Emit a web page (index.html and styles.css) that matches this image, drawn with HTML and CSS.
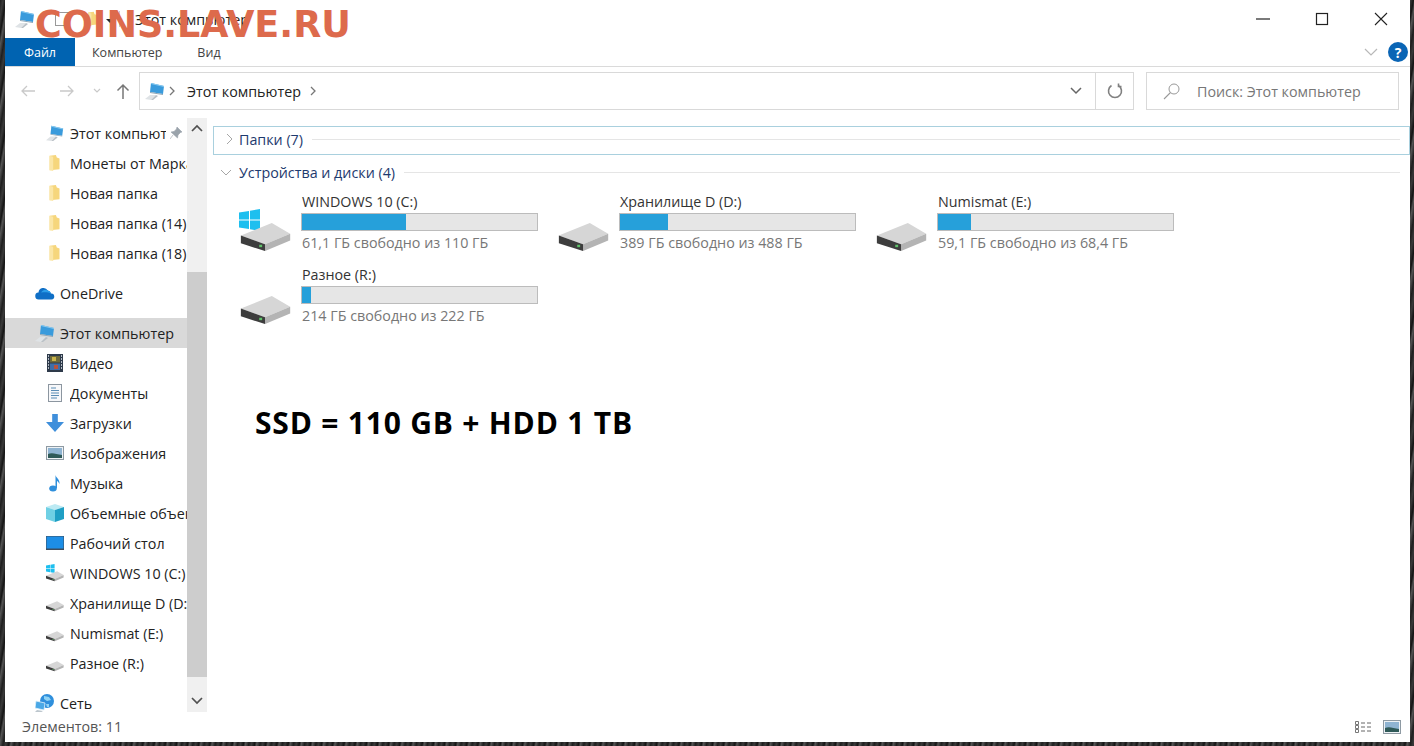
FILE: index.html
```html
<!DOCTYPE html>
<html lang="ru">
<head>
<meta charset="UTF-8">
<title>Этот компьютер</title>
<link rel="stylesheet" href="styles.css">
</head>
<body>
<svg class="defs" width="0" height="0">
  <symbol id="pc" viewBox="0 0 20 20">
    <polygon points="6,2 19,5 18,13 5,11" fill="#3a9bdc"/>
    <polygon points="6,2 19,5 19,6 6,3" fill="#8ccbf0"/>
    <polygon points="5,11 18,13 18,14 5,12" fill="#8fa7b8"/>
    <polygon points="5,14 11,14 6,19 0,18" fill="#dfe3e6"/>
    <polygon points="11,14 13,15 8,19 6,19" fill="#b9c0c6"/>
  </symbol>
  <symbol id="folder" viewBox="0 0 16 20">
    <polygon points="2,2 9,1 10,4 13,5 13,17 2,18" fill="#f6d67c"/>
    <polygon points="2,2 6,3 6,19 2,18" fill="#fbe6a6"/>
  </symbol>
  <symbol id="hdd" viewBox="0 0 52 30">
    <polygon points="0,13 32,0 51,11 25,22" fill="#d6d6d6"/>
    <polygon points="25,22 51,11 51,18 25,29" fill="#b4b4b4"/>
    <polygon points="0,13 25,22 25,29 0,21" fill="#3d3d3d"/>
    <rect x="19" y="22.500" width="3" height="2.500" fill="#5fc26a"/>
  </symbol>
  <symbol id="win" viewBox="0 0 22 22">
    <polygon points="0,3.500 10,2 10,10.500 0,10.500" fill="#1ebfef"/>
    <polygon points="11,1.800 21,0 21,10.500 11,10.500" fill="#1ebfef"/>
    <polygon points="0,11.500 10,11.500 10,20 0,18.500" fill="#1ebfef"/>
    <polygon points="11,11.500 21,11.500 21,22 11,20.200" fill="#1ebfef"/>
  </symbol>
  <symbol id="cloud" viewBox="0 0 20 14">
    <path d="M4 13.500a3.500 3.500 0 0 1-.5-7 5 5 0 0 1 9.300-2 4 4 0 0 1 3.200 3 3 3 0 0 1 .5 6z" fill="#0f6fc6"/>
    <path d="M6 6.500a5 5 0 0 1 6.800-2 4 4 0 0 1 3.200 3c-3-1.500-6-1.500-10-1z" fill="#2b9de8"/>
  </symbol>
  <symbol id="video" viewBox="0 0 16 18">
    <rect width="16" height="18" fill="#2e3a4a"/>
    <rect x="3" y="2" width="10" height="6.500" fill="#6d6a3a"/>
    <rect x="3" y="9.500" width="10" height="6.500" fill="#3f6fa8"/>
    <rect x="5" y="3" width="4" height="4" fill="#c9b44a"/>
    <rect x="7" y="11" width="4" height="4" fill="#b8533d"/>
    <path d="M1 2h1M1 5h1M1 8h1M1 11h1M1 14h1M14 2h1M14 5h1M14 8h1M14 11h1M14 14h1" stroke="#dfe6ee" stroke-width="1.500"/>
  </symbol>
  <symbol id="doc" viewBox="0 0 14 18">
    <rect x=".5" y=".5" width="13" height="17" fill="#f7f8fa" stroke="#8c96a0"/>
    <path d="M3 4h5M3 6.500h8M3 9h8M3 11.500h8M3 14h6" stroke="#5b8db5"/>
  </symbol>
  <symbol id="down" viewBox="0 0 16 16">
    <polygon points="5.500,0 10.500,0 10.500,7 16,7 8,16 0,7 5.500,7" fill="#3f8fdb"/>
  </symbol>
  <symbol id="pic" viewBox="0 0 18 14">
    <rect x=".5" y=".5" width="17" height="13" fill="#eef2f5" stroke="#8e9aa3"/>
    <rect x="2" y="2" width="14" height="10" fill="#8fb4d2"/>
    <path d="M2 8c4-2 8 0 14 1v3H2z" fill="#2f5a58"/>
  </symbol>
  <symbol id="note" viewBox="0 0 12 18">
    <ellipse cx="4" cy="14.500" rx="3.800" ry="3" fill="#2f8fdc"/>
    <path d="M6.500 14V1c.5 3 4.500 4 4 9-1-2-2-3-2.500-3v7z" fill="#2f8fdc"/>
  </symbol>
  <symbol id="cube" viewBox="0 0 18 18">
    <polygon points="9,0 18,3 9,6 0,3" fill="#bdeaf3"/>
    <polygon points="0,3 9,6 9,18 0,15" fill="#6fd0e4"/>
    <polygon points="9,6 18,3 18,15 9,18" fill="#1f9fc4"/>
  </symbol>
  <symbol id="desk" viewBox="0 0 18 14">
    <rect width="18" height="14" fill="#3e4c5c"/>
    <rect x=".5" y=".5" width="17" height="12" fill="#1d8ee6"/>
  </symbol>
  <symbol id="net" viewBox="0 0 20 20">
    <circle cx="12" cy="8" r="7" fill="#2f8fdc"/>
    <path d="M9 3l5 1 2 3-4 1-3-2zM11 11l3 0 0 3-2 0z" fill="#8fd3f5"/>
    <polygon points="1,8 10,10 9,17 0,15" fill="#4aa8e6" stroke="#dff1fb" stroke-width=".8"/>
    <polygon points="2,17 8,18 5,20 0,19" fill="#bcc6cd"/>
  </symbol>
</svg>

<div class="window">
  <header class="titlebar">
    <svg class="ic-pc-title"><use href="#pc"/></svg>
    <span class="qa-check"></span>
    <svg class="qa-folder"><use href="#folder"/></svg>
    <span class="qa-drop"></span>
    <span class="qa-sep"></span>
    <span class="title-text">Этот компьютер</span>
    <div class="winbtns">
      <svg width="16" height="16" viewBox="0 0 16 16"><path d="M1 8h14" stroke="#222" stroke-width="1.200"/></svg>
      <svg width="16" height="16" viewBox="0 0 16 16"><rect x="2.500" y="2.500" width="11" height="11" fill="none" stroke="#222" stroke-width="1.200"/></svg>
      <svg width="16" height="16" viewBox="0 0 16 16"><path d="M2 2l12 12M14 2L2 14" stroke="#222" stroke-width="1.100"/></svg>
    </div>
  </header>

  <nav class="tabs">
    <span class="tab tab-file">Файл</span>
    <span class="tab tab-pc">Компьютер</span>
    <span class="tab tab-view">Вид</span>
    <svg class="ribbon-chev" width="14" height="8" viewBox="0 0 14 8"><path d="M1 1l6 6 6-6" fill="none" stroke="#b8b8b8" stroke-width="1.200"/></svg>
    <span class="help">?</span>
  </nav>

  <div class="toolbar">
    <div class="navbtns">
      <svg width="16" height="14" viewBox="0 0 16 14"><path d="M15 7H2M7 2L2 7l5 5" fill="none" stroke="#c9c9c9" stroke-width="1.300"/></svg>
      <svg width="16" height="14" viewBox="0 0 16 14"><path d="M1 7h13M9 2l5 5-5 5" fill="none" stroke="#c9c9c9" stroke-width="1.300"/></svg>
      <svg width="8" height="6" viewBox="0 0 8 6"><path d="M1 1l3 3 3-3" fill="none" stroke="#c9c9c9" stroke-width="1.200"/></svg>
      <svg width="14" height="16" viewBox="0 0 14 16"><path d="M7 16V2M1.500 7.500L7 2l5.500 5.500" fill="none" stroke="#777" stroke-width="1.500"/></svg>
    </div>
    <div class="address">
      <svg class="addr-pc"><use href="#pc"/></svg>
      <svg class="crumb" width="7" height="10" viewBox="0 0 7 10"><path d="M1 1l4 4-4 4" fill="none" stroke="#777" stroke-width="1.300"/></svg>
      <span class="addr-text">Этот компьютер</span>
      <svg class="crumb" width="7" height="10" viewBox="0 0 7 10"><path d="M1 1l4 4-4 4" fill="none" stroke="#777" stroke-width="1.300"/></svg>
      <svg class="addr-drop" width="12" height="8" viewBox="0 0 12 8"><path d="M1 1l5 5 5-5" fill="none" stroke="#666" stroke-width="1.500"/></svg>
      <span class="refresh">
        <svg width="16" height="16" viewBox="0 0 16 16"><path d="M4.500 2.500a6.500 6.500 0 1 0 7 0M11.500 .5v3h3" fill="none" stroke="#808080" stroke-width="1.600"/></svg>
      </span>
    </div>
    <div class="search">
      <svg width="18" height="18" viewBox="0 0 18 18"><circle cx="11" cy="7" r="5" fill="none" stroke="#999"/><path d="M7.500 10.500L1 17" stroke="#999" stroke-width="1.100"/></svg>
      <span>Поиск: Этот компьютер</span>
    </div>
  </div>

  <div class="main">
    <aside class="sidebar">
      <div class="tree">
        <div class="group">
          <div class="row"><svg class="ic"><use href="#pc"/></svg><span class="label label-pinned">Этот компьютер</span>
            <svg class="pin" width="12" height="12" viewBox="0 0 12 12"><path d="M7 0l5 5-1.500.5L8 8l-.5 3L1 5l3-.5 2.500-2.500z M3 8l-3 4" fill="#9aa3ab" stroke="#9aa3ab" stroke-width=".6"/></svg>
          </div>
          <div class="row"><svg class="ic"><use href="#folder"/></svg><span class="label">Монеты от Марка</span></div>
          <div class="row"><svg class="ic"><use href="#folder"/></svg><span class="label">Новая папка</span></div>
          <div class="row"><svg class="ic"><use href="#folder"/></svg><span class="label">Новая папка (14)</span></div>
          <div class="row"><svg class="ic"><use href="#folder"/></svg><span class="label">Новая папка (18)</span></div>
        </div>
        <div class="group">
          <div class="row row-top"><svg class="ic ic-cloud"><use href="#cloud"/></svg><span class="label">OneDrive</span></div>
        </div>
        <div class="group">
          <div class="row row-top row-sel"><svg class="ic"><use href="#pc"/></svg><span class="label">Этот компьютер</span></div>
          <div class="row"><svg class="ic"><use href="#video"/></svg><span class="label">Видео</span></div>
          <div class="row"><svg class="ic"><use href="#doc"/></svg><span class="label">Документы</span></div>
          <div class="row"><svg class="ic"><use href="#down"/></svg><span class="label">Загрузки</span></div>
          <div class="row"><svg class="ic"><use href="#pic"/></svg><span class="label">Изображения</span></div>
          <div class="row"><svg class="ic"><use href="#note"/></svg><span class="label">Музыка</span></div>
          <div class="row"><svg class="ic"><use href="#cube"/></svg><span class="label">Объемные объекты</span></div>
          <div class="row"><svg class="ic"><use href="#desk"/></svg><span class="label">Рабочий стол</span></div>
          <div class="row"><span class="ic ic-drive ic-drive-win"><svg class="mini-win"><use href="#win"/></svg><svg class="mini-hdd"><use href="#hdd"/></svg></span><span class="label">WINDOWS 10 (C:)</span></div>
          <div class="row"><span class="ic ic-drive"><svg class="mini-hdd"><use href="#hdd"/></svg></span><span class="label">Хранилище D (D:)</span></div>
          <div class="row"><span class="ic ic-drive"><svg class="mini-hdd"><use href="#hdd"/></svg></span><span class="label">Numismat (E:)</span></div>
          <div class="row"><span class="ic ic-drive"><svg class="mini-hdd"><use href="#hdd"/></svg></span><span class="label">Разное (R:)</span></div>
        </div>
        <div class="group">
          <div class="row row-top"><svg class="ic"><use href="#net"/></svg><span class="label">Сеть</span></div>
        </div>
      </div>
      <div class="scrollbar">
        <span class="sb-btn"><svg width="12" height="8" viewBox="0 0 12 8"><path d="M1 7l5-5 5 5" fill="none" stroke="#505050" stroke-width="1.700"/></svg></span>
        <span class="sb-thumb"></span>
        <span class="sb-btn sb-btn-down"><svg width="12" height="8" viewBox="0 0 12 8"><path d="M1 1l5 5 5-5" fill="none" stroke="#505050" stroke-width="1.700"/></svg></span>
      </div>
    </aside>

    <section class="content">
      <div class="section section-closed">
        <svg width="7" height="12" viewBox="0 0 7 12"><path d="M1 1l5 5-5 5" fill="none" stroke="#a6a6a6"/></svg>
        <span class="section-name">Папки (7)</span>
        <span class="section-line"></span>
      </div>
      <div class="section section-open">
        <svg width="12" height="7" viewBox="0 0 12 7"><path d="M1 1l5 5 5-5" fill="none" stroke="#a6a6a6"/></svg>
        <span class="section-name">Устройства и диски (4)</span>
        <span class="section-line"></span>
      </div>

      <div class="drives">
        <div class="drive">
          <div class="drive-icon">
            <svg class="drive-win"><use href="#win"/></svg>
            <svg class="drive-hdd"><use href="#hdd"/></svg>
          </div>
          <div class="drive-info">
            <div class="drive-name">WINDOWS 10 (C:)</div>
            <div class="bar"><div class="bar-fill" style="width:44.400%"></div></div>
            <div class="drive-free">61,1 ГБ свободно из 110 ГБ</div>
          </div>
        </div>
        <div class="drive">
          <div class="drive-icon"><svg class="drive-hdd"><use href="#hdd"/></svg></div>
          <div class="drive-info">
            <div class="drive-name">Хранилище D (D:)</div>
            <div class="bar"><div class="bar-fill" style="width:20.300%"></div></div>
            <div class="drive-free">389 ГБ свободно из 488 ГБ</div>
          </div>
        </div>
        <div class="drive">
          <div class="drive-icon"><svg class="drive-hdd"><use href="#hdd"/></svg></div>
          <div class="drive-info">
            <div class="drive-name">Numismat (E:)</div>
            <div class="bar"><div class="bar-fill" style="width:14%"></div></div>
            <div class="drive-free">59,1 ГБ свободно из 68,4 ГБ</div>
          </div>
        </div>
        <div class="drive">
          <div class="drive-icon"><svg class="drive-hdd"><use href="#hdd"/></svg></div>
          <div class="drive-info">
            <div class="drive-name">Разное (R:)</div>
            <div class="bar"><div class="bar-fill" style="width:4%"></div></div>
            <div class="drive-free">214 ГБ свободно из 222 ГБ</div>
          </div>
        </div>
      </div>

      <p class="note">SSD = 110 GB + HDD 1 TB</p>
    </section>
  </div>

  <footer class="status">
    <span>Элементов: 11</span>
    <div class="views">
      <svg width="18" height="14" viewBox="0 0 18 14"><path d="M1.500 1.500h3v3h-3zM1.500 5.500h3v3h-3zM1.500 9.500h3v3h-3z" fill="#fff" stroke="#777"/><path d="M7 3h4M13 3h4M7 7h4M13 7h4M7 11h4M13 11h4" stroke="#666"/></svg>
      <svg width="18" height="14" viewBox="0 0 18 14"><use href="#pic"/></svg>
    </div>
  </footer>
</div>

<div class="watermark">COINS.LAVE.RU</div>
</body>
</html>
```

FILE: styles.css
```css
* {
  margin: 0;
  padding: 0;
  box-sizing: border-box;
}

body {
  position: relative;
  width: 1414px;
  height: 746px;
  overflow: hidden;
  background: repeating-linear-gradient(100deg, #1d1d1d 0, #3a3a3a 3px, #141414 6px, #555 8px, #222 11px);
  font-family: "Open Sans", "Noto Sans", sans-serif;
  font-size: 14.300px;
  color: #333;
}

.defs {
  position: absolute;
}

.window {
  display: flex;
  flex-direction: column;
  width: 1405px;
  height: 742px;
  margin-left: 5px;
  background: #fff;
}

/* title bar */
.titlebar {
  display: flex;
  align-items: center;
  height: 38px;
  flex: none;
}

.ic-pc-title {
  width: 20px;
  height: 20px;
  margin-left: 10px;
}

.qa-check {
  width: 14px;
  height: 14px;
  margin-left: 20px;
  border: 1px solid #999;
}

.qa-folder {
  width: 14px;
  height: 16px;
  margin-left: 17px;
}

.qa-drop {
  width: 0;
  height: 0;
  margin-left: 6px;
  margin-top: 3px;
  border-left: 4px solid transparent;
  border-right: 4px solid transparent;
  border-top: 4px solid #222;
}

.qa-sep {
  width: 1px;
  height: 16px;
  margin-left: 5px;
  background: #ccc;
}

.title-text {
  margin-left: 15px;
  color: #222;
}

.winbtns {
  display: flex;
  align-items: center;
  gap: 43px;
  margin-left: auto;
  margin-right: 21px;
}

/* ribbon tabs */
.tabs {
  display: flex;
  align-items: center;
  height: 29px;
  flex: none;
  font-size: 12.500px;
  border-bottom: 1px solid #dadada;
}

.tab {
  display: flex;
  align-items: center;
  justify-content: center;
  height: 28px;
  color: #444;
}

.tab-file {
  width: 70px;
  background: #0063b1;
  color: #fff;
}

.tab-pc {
  margin-left: 17px;
}

.tab-view {
  margin-left: 35px;
}

.ribbon-chev {
  margin-left: auto;
  margin-right: 10px;
}

.help {
  display: flex;
  align-items: center;
  justify-content: center;
  width: 20px;
  height: 20px;
  margin-right: 2px;
  border-radius: 50%;
  background: #0a65b5;
  color: #fff;
  font-weight: 700;
  font-size: 14px;
}

/* address row */
.toolbar {
  display: flex;
  align-items: flex-start;
  height: 51px;
  flex: none;
  padding-top: 5px;
}

.navbtns {
  display: flex;
  align-items: center;
  width: 134px;
  height: 38px;
  padding-left: 15px;
  gap: 23px;
}

.navbtns svg:nth-child(3) {
  margin-left: -5px;
  margin-right: -8px;
}

.address {
  display: flex;
  align-items: center;
  width: 995px;
  height: 38px;
  border: 1px solid #d9d9d9;
}

.addr-pc {
  width: 20px;
  height: 20px;
  margin-left: 5px;
}

.crumb {
  margin-left: 4px;
}

.addr-text {
  margin-left: 11px;
  margin-right: 5px;
  color: #222;
}

.addr-drop {
  margin-left: auto;
  margin-right: 13px;
}

.refresh {
  display: flex;
  align-items: center;
  justify-content: center;
  width: 38px;
  height: 100%;
  border-left: 1px solid #d9d9d9;
}

.search {
  display: flex;
  align-items: center;
  width: 253px;
  height: 38px;
  margin-left: 12px;
  padding-left: 16px;
  gap: 16px;
  border: 1px solid #d9d9d9;
  color: #777;
}

/* main area */
.main {
  display: flex;
  flex: 1;
  min-height: 0;
}

.sidebar {
  display: flex;
  width: 202px;
  flex: none;
  height: 594px;
}

.tree {
  width: 182px;
  flex: none;
  overflow: hidden;
}

.group + .group {
  margin-top: 10px;
}

.row {
  position: relative;
  display: flex;
  align-items: center;
  height: 30px;
  padding-left: 41px;
  color: #222;
}

.row-top {
  padding-left: 30px;
}

.row-sel {
  background: #d9d9d9;
}

.ic {
  display: block;
  width: 18px;
  height: 18px;
  flex: none;
}

.row-top .ic {
  width: 20px;
  height: 20px;
}

.ic-drive {
  position: relative;
}

.mini-hdd {
  position: absolute;
  left: 0;
  bottom: 0;
  width: 18px;
  height: 11px;
}

.mini-win {
  position: absolute;
  left: 0;
  top: 0;
  width: 9px;
  height: 9px;
}

.label {
  flex: 1;
  min-width: 0;
  margin-left: 6px;
  overflow: hidden;
  white-space: nowrap;
}

.row-top .label {
  margin-left: 5px;
}

.label-pinned {
  flex: none;
  width: 96px;
}

.pin {
  margin-left: 4px;
}

.scrollbar {
  display: flex;
  flex-direction: column;
  width: 20px;
  flex: none;
  background: #f0f0f0;
}

.sb-btn {
  display: flex;
  justify-content: center;
  padding-top: 6px;
  flex: none;
}

.sb-thumb {
  flex: none;
  height: 405px;
  margin-top: 140px;
  background: #cdcdcd;
}

.sb-btn-down {
  padding-top: 20px;
}

/* file list */
.content {
  flex: 1;
  min-width: 0;
  padding-left: 6px;
  padding-top: 8px;
}

.section {
  display: flex;
  align-items: center;
  color: #1e3a6e;
}

.section-closed {
  height: 29px;
  padding-left: 12px;
  padding-right: 9px;
  padding-bottom: 3px;
  border: 1px solid #a9d0de;
}

.section-open {
  height: 20px;
  margin-top: 7px;
  padding-left: 7px;
  padding-right: 10px;
}

.section-closed .section-name {
  margin-left: 6px;
}

.section-name {
  margin-left: 7px;
}

.section-line {
  flex: 1;
  height: 1px;
  margin-left: 9px;
  background: #e5e5e5;
}

.drives {
  display: grid;
  grid-template-columns: repeat(3, 318px);
  grid-auto-rows: 73px;
  margin-top: 10px;
  margin-left: 24px;
}

.drive {
  display: flex;
}

.drive-icon {
  position: relative;
  width: 65px;
  flex: none;
}

.drive-hdd {
  position: absolute;
  left: 3px;
  top: 31px;
  width: 52px;
  height: 29px;
}

.drive-win {
  position: absolute;
  left: 2px;
  top: 17px;
  width: 22px;
  height: 22px;
}

.drive-name {
  height: 21px;
  line-height: 20px;
  color: #333;
}

.bar {
  width: 237px;
  height: 18px;
  margin-left: -1px;
  border: 1px solid #bcbcbc;
  background: #e6e6e6;
}

.bar-fill {
  height: 100%;
  background: #26a0da;
}

.drive-free {
  margin-top: 1px;
  height: 21px;
  line-height: 21px;
  color: #777;
}

.note {
  margin-top: 64px;
  margin-left: 42px;
  font-size: 30px;
  font-weight: 700;
  letter-spacing: .8px;
  color: #000;
}

/* status bar */
.status {
  display: flex;
  align-items: center;
  justify-content: space-between;
  height: 28px;
  flex: none;
  padding-left: 17px;
  padding-right: 9px;
  padding-bottom: 3px;
  color: #555;
}

.views {
  display: flex;
  gap: 11px;
}

.watermark {
  position: absolute;
  left: 35px;
  top: 3px;
  font-family: "DejaVu Sans", sans-serif;
  font-size: 36.500px;
  font-weight: 700;
  color: #dd6a4c;
}
```
